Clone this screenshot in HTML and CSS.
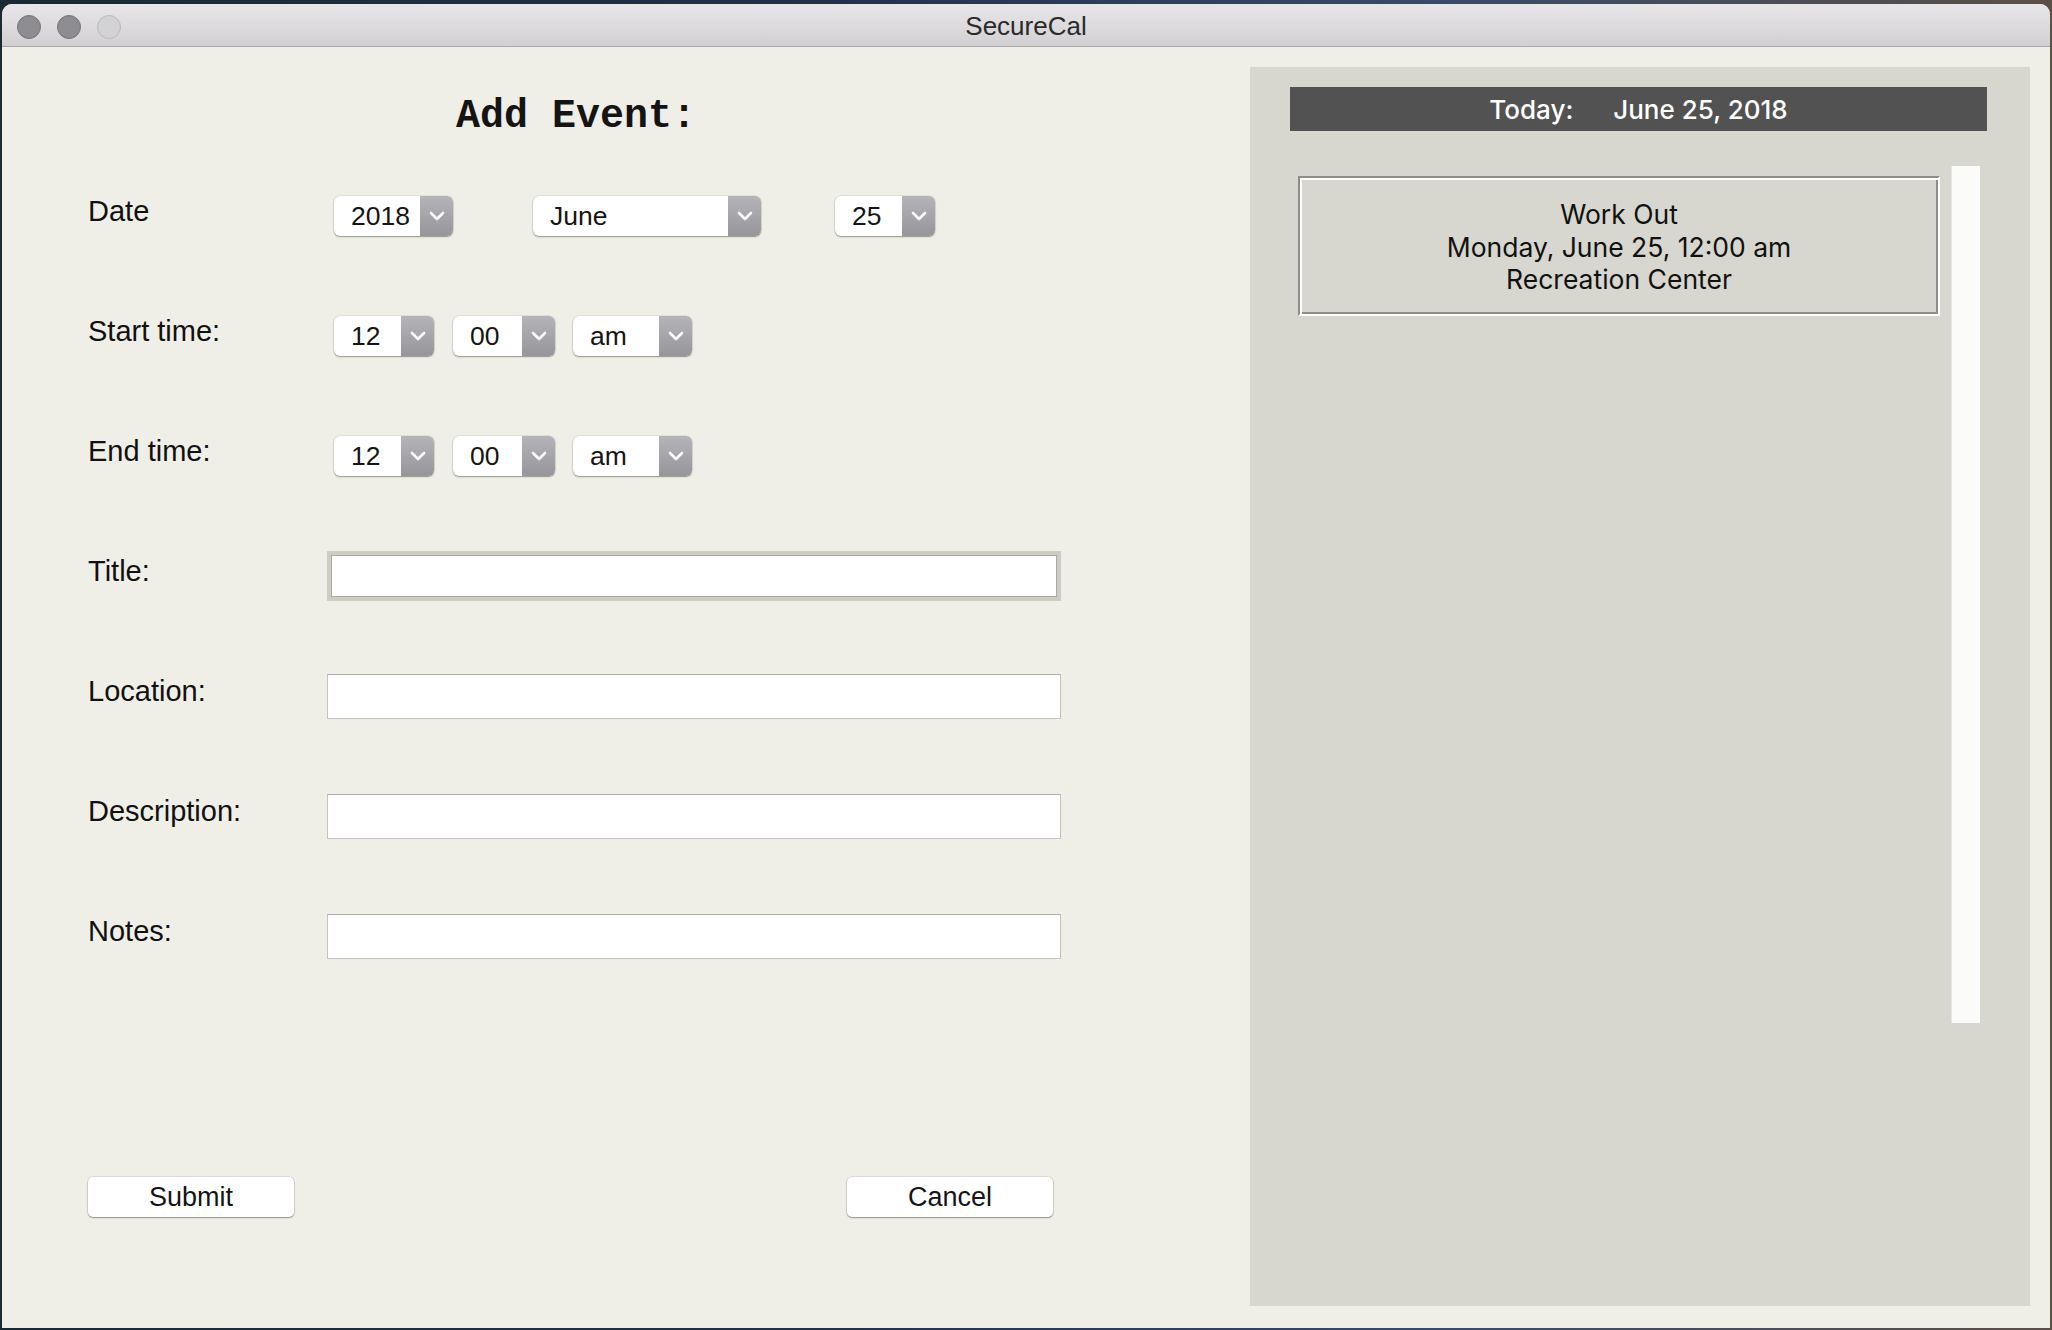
FILE: index.html
```html
<!DOCTYPE html>
<html>
<head>
<meta charset="utf-8">
<title>SecureCal</title>
<link rel="stylesheet" href="styles.css">
</head>
<body>
<div class="window">
  <div class="titlebar">
    <div class="lights">
      <span class="light dark"></span>
      <span class="light dark"></span>
      <span class="light pale"></span>
    </div>
    <div class="wintitle">SecureCal</div>
    <div></div>
  </div>
  <div class="content">
    <div class="form">
      <h1 class="heading">Add Event:</h1>

      <div class="row">
        <div class="label">Date</div>
        <div class="controls date-controls">
          <div class="select w-year"><span class="val">2018</span><span class="arrow"><svg width="16" height="10" viewBox="0 0 16 10"><path d="M2 2 L8 8 L14 2" fill="none" stroke="#fff" stroke-width="2.6" stroke-linecap="round" stroke-linejoin="round"/></svg></span></div>
          <div class="select w-month"><span class="val">June</span><span class="arrow"><svg width="16" height="10" viewBox="0 0 16 10"><path d="M2 2 L8 8 L14 2" fill="none" stroke="#fff" stroke-width="2.6" stroke-linecap="round" stroke-linejoin="round"/></svg></span></div>
          <div class="select w-day"><span class="val">25</span><span class="arrow"><svg width="16" height="10" viewBox="0 0 16 10"><path d="M2 2 L8 8 L14 2" fill="none" stroke="#fff" stroke-width="2.6" stroke-linecap="round" stroke-linejoin="round"/></svg></span></div>
        </div>
      </div>

      <div class="row">
        <div class="label">Start time:</div>
        <div class="controls time-controls">
          <div class="select w-hour"><span class="val">12</span><span class="arrow"><svg width="16" height="10" viewBox="0 0 16 10"><path d="M2 2 L8 8 L14 2" fill="none" stroke="#fff" stroke-width="2.6" stroke-linecap="round" stroke-linejoin="round"/></svg></span></div>
          <div class="select w-min"><span class="val">00</span><span class="arrow"><svg width="16" height="10" viewBox="0 0 16 10"><path d="M2 2 L8 8 L14 2" fill="none" stroke="#fff" stroke-width="2.6" stroke-linecap="round" stroke-linejoin="round"/></svg></span></div>
          <div class="select w-ampm"><span class="val">am</span><span class="arrow"><svg width="16" height="10" viewBox="0 0 16 10"><path d="M2 2 L8 8 L14 2" fill="none" stroke="#fff" stroke-width="2.6" stroke-linecap="round" stroke-linejoin="round"/></svg></span></div>
        </div>
      </div>

      <div class="row">
        <div class="label">End time:</div>
        <div class="controls time-controls">
          <div class="select w-hour"><span class="val">12</span><span class="arrow"><svg width="16" height="10" viewBox="0 0 16 10"><path d="M2 2 L8 8 L14 2" fill="none" stroke="#fff" stroke-width="2.6" stroke-linecap="round" stroke-linejoin="round"/></svg></span></div>
          <div class="select w-min"><span class="val">00</span><span class="arrow"><svg width="16" height="10" viewBox="0 0 16 10"><path d="M2 2 L8 8 L14 2" fill="none" stroke="#fff" stroke-width="2.6" stroke-linecap="round" stroke-linejoin="round"/></svg></span></div>
          <div class="select w-ampm"><span class="val">am</span><span class="arrow"><svg width="16" height="10" viewBox="0 0 16 10"><path d="M2 2 L8 8 L14 2" fill="none" stroke="#fff" stroke-width="2.6" stroke-linecap="round" stroke-linejoin="round"/></svg></span></div>
        </div>
      </div>

      <div class="row">
        <div class="label">Title:</div>
        <div class="controls"><div class="textbox focused"></div></div>
      </div>
      <div class="row">
        <div class="label">Location:</div>
        <div class="controls"><div class="textbox"></div></div>
      </div>
      <div class="row">
        <div class="label">Description:</div>
        <div class="controls"><div class="textbox"></div></div>
      </div>
      <div class="row">
        <div class="label">Notes:</div>
        <div class="controls"><div class="textbox"></div></div>
      </div>

      <div class="buttons">
        <div class="btn">Submit</div>
        <div class="btn">Cancel</div>
      </div>
    </div>

    <div class="panel">
      <div class="today"><span>Today:</span><span class="today-date">June 25, 2018</span></div>
      <div class="list">
        <div class="events">
          <div class="card">
            <div>Work Out</div>
            <div>Monday, June 25, 12:00 am</div>
            <div>Recreation Center</div>
          </div>
        </div>
        <div class="scrollbar"></div>
      </div>
    </div>
  </div>
</div>
</body>
</html>
```

FILE: styles.css
```css
html, body {
  margin: 0;
  padding: 0;
}
body {
  background: linear-gradient(90deg, #1a2a33 0%, #22304a 40%, #3a4a6a 70%, #5a5048 100%);
  width: 2052px;
  height: 1330px;
  overflow: hidden;
  font-family: "Liberation Sans", Arial, sans-serif;
}
.window {
  margin: 4px 2px 0 2px;
  height: 1324px;
  border-radius: 10px 10px 0 0;
  overflow: hidden;
  display: flex;
  flex-direction: column;
  background: #f0efe7;
}
.titlebar {
  height: 39px;
  padding-top: 3px;
  border-bottom: 1px solid #a9a8aa;
  background: linear-gradient(#e8e6e8, #d2d0d2);
  display: grid;
  grid-template-columns: 1fr auto 1fr;
  align-items: center;
}
.lights {
  display: flex;
  gap: 16px;
  padding-left: 15px;
}
.light {
  width: 24px;
  height: 24px;
  border-radius: 50%;
  box-sizing: border-box;
}
.light.dark {
  background: #8d8c91;
  border: 1px solid #77767a;
}
.light.pale {
  background: #d3d2d4;
  border: 1px solid #b9b8ba;
}
.wintitle {
  font-size: 26px;
  color: #2a2a2a;
}
.content {
  flex: 1;
  display: flex;
  background: #f0efe7;
}
.form {
  width: 976px;
  padding-left: 86px;
  padding-top: 45px;
  margin-right: 186px;
}
.heading {
  margin: 0;
  height: 50px;
  line-height: 50px;
  text-align: center;
  font-family: "Liberation Mono", "Courier New", monospace;
  font-weight: bold;
  font-size: 40px;
  color: #141414;
  margin-bottom: 14px;
}
.row {
  display: grid;
  grid-template-columns: 246px 1fr;
  height: 120px;
  align-items: center;
}
.label {
  font-size: 29px;
  color: #111;
  padding-bottom: 10px;
}
.controls {
  display: flex;
  align-items: center;
}
.date-controls .w-year { margin-right: 80px; }
.date-controls .w-month { margin-right: 74px; }
.time-controls { gap: 19px; }
.time-controls .w-min { margin-right: -1px; }
.select {
  height: 40px;
  display: flex;
  border-radius: 6px;
  background: #fff;
  box-shadow: 0 1px 1.5px rgba(0,0,0,0.35), 0 0 0 0.5px rgba(0,0,0,0.12);
  overflow: hidden;
  box-sizing: border-box;
}
.select .val {
  flex: 1;
  font-size: 26.5px;
  line-height: 40px;
  color: #151515;
  padding-left: 17px;
}
.select .arrow {
  width: 33px;
  background: linear-gradient(#b5b4b9, #96959a);
  display: flex;
  align-items: center;
  justify-content: center;
}
.w-year { width: 119px; }
.w-month { width: 228px; }
.w-day { width: 100px; }
.w-hour { width: 100px; }
.w-min { width: 102px; }
.w-ampm { width: 119px; }
.textbox {
  margin-left: -7px;
  width: 734px;
  height: 45px;
  box-sizing: border-box;
  background: #fff;
  border: 1px solid #c3c3c0;
  border-top-color: #b0b0ae;
}
.textbox.focused {
  margin-left: -3px;
  width: 726px;
  height: 42px;
  border: 1px solid #a9a9a9;
  box-shadow: 0 0 0 4px #cdcdc6;
}
.buttons {
  display: flex;
  gap: 553px;
  margin-top: 181px;
}
.btn {
  width: 206px;
  height: 40px;
  box-sizing: border-box;
  background: #fff;
  border-radius: 5px;
  box-shadow: 0 1px 1.5px rgba(0,0,0,0.35), 0 0 0 0.5px rgba(0,0,0,0.15);
  font-size: 27px;
  line-height: 40px;
  text-align: center;
  color: #151515;
}
.panel {
  width: 780px;
  margin: 20px 0 22px 0;
  background: #d7d7cf;
  box-sizing: border-box;
  padding: 20px 43px 0 40px;
  display: flex;
  flex-direction: column;
  font-family: Inter, "Liberation Sans", sans-serif;
}
.today {
  height: 44px;
  background: #525252;
  color: #fff;
  font-size: 26px;
  font-weight: 500;
  display: flex;
  justify-content: center;
  align-items: center;
}
.today-date {
  margin-left: 40px;
}
.list {
  margin-top: 35px;
  margin-left: 8px;
  display: flex;
  gap: 11px;
  height: 857px;
}
.events {
  width: 642px;
  padding-top: 10px;
}
.card {
  height: 140px;
  box-sizing: border-box;
  border: 2px solid;
  border-color: #8d8d8a #fff #fff #8d8d8a;
  box-shadow: inset 2px 2px 0 #fff, inset -2px -2px 0 #8d8d8a;
  display: flex;
  flex-direction: column;
  justify-content: center;
  align-items: center;
  font-size: 26.5px;
  line-height: 32.5px;
  color: #111;
  padding-top: 2px;
}
.scrollbar {
  width: 29px;
  background: #fbfbfa;
  border-left: 1px solid #e6e6e2;
  box-sizing: border-box;
}
```
